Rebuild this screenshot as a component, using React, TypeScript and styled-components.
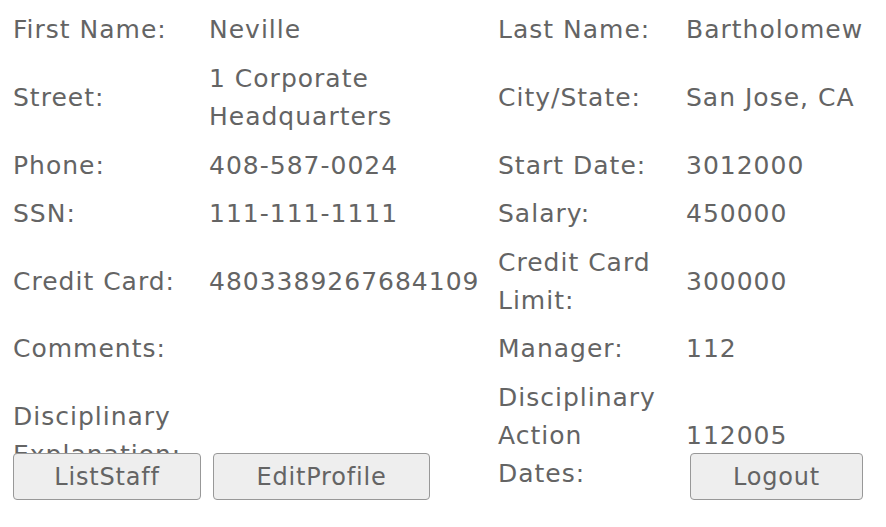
import React from "react";
import styled, { createGlobalStyle } from "styled-components";

const GlobalStyle = createGlobalStyle`
  html, body {
    margin: 0;
    padding: 0;
    background: #ffffff;
  }
  body {
    font-family: "DejaVu Sans", "Liberation Sans", sans-serif;
    font-size: 25px;
    letter-spacing: 1px;
    color: #646464;
  }
`;

const Page = styled.div`
  width: 886px;
  height: 527px;
  overflow: hidden;
  box-sizing: border-box;
  padding-top: 6.2px;
`;

const FieldGrid = styled.div`
  display: grid;
  grid-template-columns: 182px 275px 174px 1fr;
  column-gap: 14px;
  padding-left: 13px;
  align-items: center;
`;

const Cell = styled.div`
  line-height: 38px;
  padding: 5.3px 0;
  align-self: stretch;
  display: flex;
  align-items: center;
  min-width: 0;
`;

const Label = styled(Cell)``;
const Value = styled(Cell)``;

const ButtonBar = styled.div`
  display: flex;
  align-items: center;
  margin-top: -45px;
  padding-left: 13px;
  padding-right: 23px;
  position: relative;
  z-index: 1;
`;

const ActionButton = styled.button<{ $w: number; $push?: boolean }>`
  box-sizing: border-box;
  width: ${(p) => p.$w}px;
  height: 47px;
  margin-left: ${(p) => (p.$push ? "auto" : "0")};
  margin-right: 12px;
  &:last-child {
    margin-right: 0;
  }
  background: #eeeeee;
  border: 1px solid #989898;
  border-radius: 4px;
  font-family: "DejaVu Sans", "Liberation Sans", sans-serif;
  font-size: 24px;
  letter-spacing: 0.8px;
  color: #646464;
  padding: 0;
  line-height: 1;
  cursor: pointer;
`;

type Field = { label: string; value: string };

const rows: [Field, Field][] = [
  [
    { label: "First Name:", value: "Neville" },
    { label: "Last Name:", value: "Bartholomew" },
  ],
  [
    { label: "Street:", value: "1 Corporate Headquarters" },
    { label: "City/State:", value: "San Jose, CA" },
  ],
  [
    { label: "Phone:", value: "408-587-0024" },
    { label: "Start Date:", value: "3012000" },
  ],
  [
    { label: "SSN:", value: "111-111-1111" },
    { label: "Salary:", value: "450000" },
  ],
  [
    { label: "Credit Card:", value: "4803389267684109" },
    { label: "Credit Card Limit:", value: "300000" },
  ],
  [
    { label: "Comments:", value: "" },
    { label: "Manager:", value: "112" },
  ],
  [
    { label: "Disciplinary Explanation:", value: "" },
    { label: "Disciplinary Action Dates:", value: "112005" },
  ],
];

export default function App() {
  return (
    <>
      <GlobalStyle />
      <Page>
        <FieldGrid>
          {rows.map(([a, b], i) => (
            <React.Fragment key={i}>
              <Label>{a.label}</Label>
              <Value>{a.value}</Value>
              <Label>{b.label}</Label>
              <Value>{b.value}</Value>
            </React.Fragment>
          ))}
        </FieldGrid>
        <ButtonBar>
          <ActionButton $w={188}>ListStaff</ActionButton>
          <ActionButton $w={217}>EditProfile</ActionButton>
          <ActionButton $w={173} $push>
            Logout
          </ActionButton>
        </ButtonBar>
      </Page>
    </>
  );
}
